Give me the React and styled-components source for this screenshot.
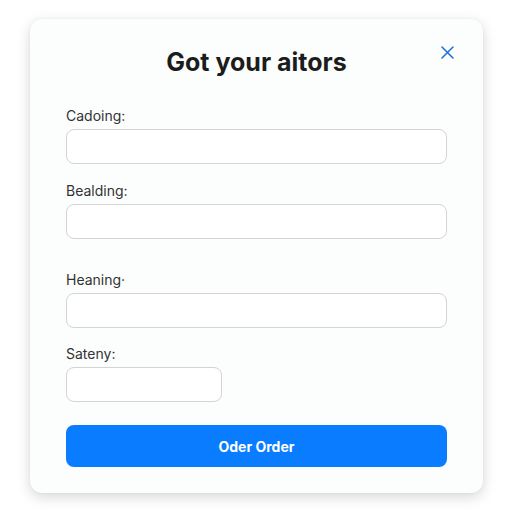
import React from 'react';
import styled, { createGlobalStyle } from 'styled-components';

const GlobalStyle = createGlobalStyle`
  body {
    margin: 0;
    background: #ffffff;
    font-family: Inter, "Noto Sans", sans-serif;
  }
`;

const Page = styled.div`
  width: 512px;
  height: 512px;
  padding: 19px 29px 0 30px;
  box-sizing: border-box;
`;

const Card = styled.div`
  position: relative;
  height: 474px;
  box-sizing: border-box;
  background: #fcfdfd;
  border-radius: 12px;
  box-shadow: 0 4px 14px rgba(0, 0, 0, 0.16), 0 0 3px rgba(0, 0, 0, 0.05);
  padding: 28px 36px 0 36px;
  display: flex;
  flex-direction: column;
`;

const Title = styled.h1`
  margin: 0;
  text-align: center;
  font-size: 25px;
  font-weight: 700;
  color: #1c1c1c;
  line-height: 30px;
`;

const Close = styled.button`
  position: absolute;
  top: 25px;
  right: 28px;
  width: 16px;
  height: 16px;
  padding: 0;
  border: none;
  background: none;
  display: flex;
  align-items: center;
  justify-content: center;
`;

const Field = styled.div`
  display: flex;
  flex-direction: column;
  flex-shrink: 0;
  margin-top: ${p => p.$top}px;
`;

const Label = styled.label`
  font-size: 14px;
  color: #333;
  line-height: 16px;
  margin-bottom: 5px;
`;

const Input = styled.div`
  width: ${p => p.$width || '100%'};
  height: 35px;
  box-sizing: border-box;
  border: 1px solid #d4d4d6;
  border-radius: 8px;
  background: #fff;
`;

const Button = styled.button`
  flex-shrink: 0;
  margin-top: 23px;
  height: 42px;
  border: none;
  border-radius: 8px;
  background: #0a7cff;
  color: #fff;
  font-family: Inter, "Noto Sans", sans-serif;
  font-size: 14px;
  font-weight: 700;
`;

const fields = [
  { label: 'Cadoing:', top: 31 },
  { label: 'Bealding:', top: 19 },
  { label: 'Heaning·', top: 33 },
  { label: 'Sateny:', top: 18, width: '156px' },
];

export default function App() {
  return (
    <Page>
      <GlobalStyle />
      <Card>
        <Title>Got your aitors</Title>
        <Close aria-label="close">
          <svg width="13" height="13" viewBox="0 0 13 13">
            <path d="M1 1L12 12M12 1L1 12" stroke="#1a6fd6" strokeWidth="1.5" strokeLinecap="round" />
          </svg>
        </Close>
        {fields.map(f => (
          <Field key={f.label} $top={f.top}>
            <Label>{f.label}</Label>
            <Input $width={f.width} />
          </Field>
        ))}
        <Button>Oder Order</Button>
      </Card>
    </Page>
  );
}
